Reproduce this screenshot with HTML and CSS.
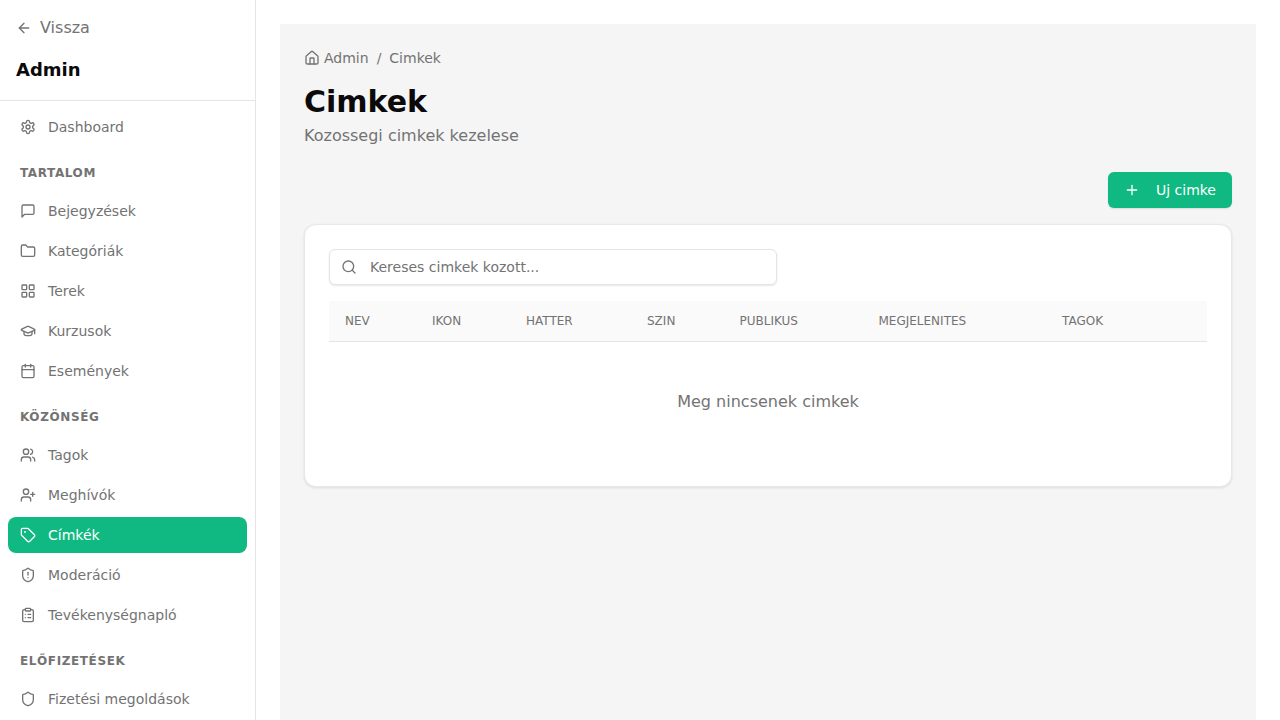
FILE: index.html
```html
<!DOCTYPE html>
<html lang="hu">
<head>
<meta charset="utf-8">
<title>Cimkek</title>
<link rel="stylesheet" href="styles.css">
</head>
<body>
<div class="app">
  <aside class="sidebar">
    <div class="side-head">
      <a class="back"><svg class="i16" viewBox="0 0 24 24"><path d="m12 19-7-7 7-7"/><path d="M19 12H5"/></svg>Vissza</a>
      <div class="side-title">Admin</div>
    </div>
    <nav class="nav">
      <a class="item"><svg class="ico" viewBox="0 0 24 24"><path d="M12.22 2h-.44a2 2 0 0 0-2 2v.18a2 2 0 0 1-1 1.73l-.43.25a2 2 0 0 1-2 0l-.15-.08a2 2 0 0 0-2.73.73l-.22.38a2 2 0 0 0 .73 2.73l.15.1a2 2 0 0 1 1 1.72v.51a2 2 0 0 1-1 1.74l-.15.09a2 2 0 0 0-.73 2.73l.22.38a2 2 0 0 0 2.73.73l.15-.08a2 2 0 0 1 2 0l.43.25a2 2 0 0 1 1 1.73V20a2 2 0 0 0 2 2h.44a2 2 0 0 0 2-2v-.18a2 2 0 0 1 1-1.73l.43-.25a2 2 0 0 1 2 0l.15.08a2 2 0 0 0 2.73-.73l.22-.39a2 2 0 0 0-.73-2.73l-.15-.08a2 2 0 0 1-1-1.74v-.5a2 2 0 0 1 1-1.74l.15-.09a2 2 0 0 0 .73-2.73l-.22-.38a2 2 0 0 0-2.73-.73l-.15.08a2 2 0 0 1-2 0l-.43-.25a2 2 0 0 1-1-1.73V4a2 2 0 0 0-2-2z"/><circle cx="12" cy="12" r="3"/></svg>Dashboard</a>
      <div class="group">Tartalom</div>
      <a class="item"><svg class="ico" viewBox="0 0 24 24"><path d="M21 15a2 2 0 0 1-2 2H7l-4 4V5a2 2 0 0 1 2-2h14a2 2 0 0 1 2 2z"/></svg>Bejegyzések</a>
      <a class="item"><svg class="ico" viewBox="0 0 24 24"><path d="M20 20a2 2 0 0 0 2-2V8a2 2 0 0 0-2-2h-7.9a2 2 0 0 1-1.69-.9L9.6 3.9A2 2 0 0 0 7.93 3H4a2 2 0 0 0-2 2v13a2 2 0 0 0 2 2Z"/></svg>Kategóriák</a>
      <a class="item"><svg class="ico" viewBox="0 0 24 24"><rect x="3" y="3" width="7" height="7" rx="1"/><rect x="14" y="3" width="7" height="7" rx="1"/><rect x="14" y="14" width="7" height="7" rx="1"/><rect x="3" y="14" width="7" height="7" rx="1"/></svg>Terek</a>
      <a class="item"><svg class="ico" viewBox="0 0 24 24"><path d="M21.42 10.922a1 1 0 0 0-.019-1.838L12.83 5.18a2 2 0 0 0-1.66 0L2.6 9.08a1 1 0 0 0 0 1.832l8.57 3.908a2 2 0 0 0 1.66 0z"/><path d="M22 10v6"/><path d="M6 12.5V16a6 3 0 0 0 12 0v-3.5"/></svg>Kurzusok</a>
      <a class="item"><svg class="ico" viewBox="0 0 24 24"><path d="M8 2v4"/><path d="M16 2v4"/><rect x="3" y="4" width="18" height="18" rx="2"/><path d="M3 10h18"/></svg>Események</a>
      <div class="group">Közönség</div>
      <a class="item"><svg class="ico" viewBox="0 0 24 24"><path d="M16 21v-2a4 4 0 0 0-4-4H6a4 4 0 0 0-4 4v2"/><circle cx="9" cy="7" r="4"/><path d="M22 21v-2a4 4 0 0 0-3-3.87"/><path d="M16 3.13a4 4 0 0 1 0 7.75"/></svg>Tagok</a>
      <a class="item"><svg class="ico" viewBox="0 0 24 24"><path d="M16 21v-2a4 4 0 0 0-4-4H6a4 4 0 0 0-4 4v2"/><circle cx="9" cy="7" r="4"/><path d="M19 8v6"/><path d="M22 11h-6"/></svg>Meghívók</a>
      <a class="item active"><svg class="ico" viewBox="0 0 24 24"><path d="M12.586 2.586A2 2 0 0 0 11.172 2H4a2 2 0 0 0-2 2v7.172a2 2 0 0 0 .586 1.414l8.704 8.704a2.426 2.426 0 0 0 3.42 0l6.58-6.58a2.426 2.426 0 0 0 0-3.42z"/><circle cx="7.5" cy="7.5" r=".5"/></svg>Címkék</a>
      <a class="item"><svg class="ico" viewBox="0 0 24 24"><path d="M20 13c0 5-3.5 7.5-7.66 8.95a1 1 0 0 1-.67-.01C7.5 20.5 4 18 4 13V6a1 1 0 0 1 1-1c2 0 4.5-1.2 6.24-2.72a1.17 1.17 0 0 1 1.52 0C14.51 3.81 17 5 19 5a1 1 0 0 1 1 1z"/><path d="M12 8v4"/><path d="M12 16h.01"/></svg>Moderáció</a>
      <a class="item"><svg class="ico" viewBox="0 0 24 24"><rect x="8" y="2" width="8" height="4" rx="1"/><path d="M16 4h2a2 2 0 0 1 2 2v14a2 2 0 0 1-2 2H6a2 2 0 0 1-2-2V6a2 2 0 0 1 2-2h2"/><path d="M12 11h4"/><path d="M12 16h4"/><path d="M8 11h.01"/><path d="M8 16h.01"/></svg>Tevékenységnapló</a>
      <div class="group">Előfizetések</div>
      <a class="item"><svg class="ico" viewBox="0 0 24 24"><path d="M20 13c0 5-3.5 7.5-7.66 8.95a1 1 0 0 1-.67-.01C7.5 20.5 4 18 4 13V6a1 1 0 0 1 1-1c2 0 4.5-1.2 6.24-2.72a1.17 1.17 0 0 1 1.52 0C14.51 3.81 17 5 19 5a1 1 0 0 1 1 1z"/></svg>Fizetési megoldások</a>
    </nav>
  </aside>
  <main class="main">
    <div class="panel">
      <div class="crumbs">
        <svg class="i16" viewBox="0 0 24 24"><path d="M15 21v-8a1 1 0 0 0-1-1h-4a1 1 0 0 0-1 1v8"/><path d="M3 10a2 2 0 0 1 .709-1.528l7-5.999a2 2 0 0 1 2.582 0l7 5.999A2 2 0 0 1 21 10v9a2 2 0 0 1-2 2H5a2 2 0 0 1-2-2z"/></svg>
        <span class="crumb-home">Admin</span><span class="sep">/</span><span>Cimkek</span>
      </div>
      <h1 class="title">Cimkek</h1>
      <p class="sub">Kozossegi cimkek kezelese</p>
      <div class="actions">
        <button class="btn"><svg class="i16" viewBox="0 0 24 24"><path d="M5 12h14"/><path d="M12 5v14"/></svg>Uj cimke</button>
      </div>
      <section class="card">
        <div class="search">
          <svg class="i16" viewBox="0 0 24 24"><circle cx="11" cy="11" r="8"/><path d="m21 21-4.3-4.3"/></svg>
          <span>Kereses cimkek kozott...</span>
        </div>
        <table class="table">
          <thead>
            <tr><th class="c1">NEV</th><th class="c2">IKON</th><th class="c3">HATTER</th><th class="c4">SZIN</th><th class="c5">PUBLIKUS</th><th class="c6">MEGJELENITES</th><th>TAGOK</th></tr>
          </thead>
        </table>
        <div class="empty">Meg nincsenek cimkek</div>
      </section>
    </div>
  </main>
</div>
</body>
</html>
```
FILE: styles.css
```css
* { box-sizing: border-box; }
html, body { margin: 0; height: 100%; overflow: hidden; }
body { font-family: "DejaVu Sans", sans-serif; color: #737373; background: #fff; }
svg { fill: none; stroke: currentColor; stroke-width: 2; stroke-linecap: round; stroke-linejoin: round; flex: none; }
.i16 { width: 16px; height: 16px; }
.ico { width: 16px; height: 16px; }
.app { display: flex; height: 720px; }
.sidebar { width: 256px; flex: none; border-right: 1px solid #e5e5e5; height: 720px; overflow: hidden; }
.side-head { padding: 16px 16px 18px; border-bottom: 1px solid #e5e5e5; height: 101px; }
.back { display: flex; align-items: center; gap: 8px; height: 24px; font-size: 16px; line-height: 24px; color: #737373; }
.side-title { margin-top: 14px; font-size: 18px; line-height: 28px; font-weight: 700; color: #0a0a0a; padding-top: 2px; }
.nav { padding: 8px; display: flex; flex-direction: column; gap: 4px; }
.item { display: flex; align-items: center; gap: 12px; height: 36px; padding: 0 12px; font-size: 14px; border-radius: 8px; color: #737373; }
.item.active { background: #10b981; color: #fff; }
.group { font-size: 12px; font-weight: 700; letter-spacing: .6px; text-transform: uppercase; color: #737373; padding: 2px 12px 0; height: 20px; line-height: 16px; margin-top: 14px; margin-bottom: 6px; }
.main { flex: 1; min-width: 0; padding: 24px 24px 0; }
.panel { background: #f5f5f5; height: 696px; padding: 24px; }
.crumbs { display: flex; align-items: center; height: 20px; font-size: 14px; line-height: 20px; color: #737373; }
.crumb-home { margin-left: 4px; }
.sep { margin: 0 8px; }
.title { margin: 16px 0 0; font-size: 30px; line-height: 36px; font-weight: 700; color: #0a0a0a; }
.sub { margin: 4px 0 0; font-size: 16px; line-height: 24px; color: #737373; }
.actions { display: flex; justify-content: flex-end; margin-top: 24px; }
.btn { display: flex; align-items: center; gap: 16px; height: 36px; padding: 0 16px; border: 0; border-radius: 6px; background: #10b981; color: #fff; font: 400 14px "DejaVu Sans", sans-serif; box-shadow: 0 1px 2px rgba(0,0,0,.1); }
.card { margin-top: 16px; background: #fff; border: 1px solid #e8e8e8; border-radius: 12px; box-shadow: 0 1px 3px rgba(0,0,0,.1); padding: 24px; height: 263px; }
.search { display: flex; align-items: center; gap: 13px; width: 448px; height: 36px; padding: 0 11px; border: 1px solid #e5e5e5; border-radius: 6px; background: #fff; font-size: 14px; color: #737373; box-shadow: 0 1px 2px rgba(0,0,0,.1); }
.table { width: 100%; margin-top: 16px; border-collapse: collapse; table-layout: fixed; }
.table thead tr { background: #fafafa; border-bottom: 1px solid #e5e5e5; }
.table th { height: 40px; padding: 0 16px; text-align: left; font: 400 12px "DejaVu Sans", sans-serif; color: #737373; }
.c1 { width: 87px; } .c2 { width: 94px; } .c3 { width: 121px; } .c4 { width: 92.5px; } .c5 { width: 139px; } .c6 { width: 183.5px; }
.empty { text-align: center; font-size: 16px; line-height: 24px; margin-top: 48px; color: #737373; }
```
